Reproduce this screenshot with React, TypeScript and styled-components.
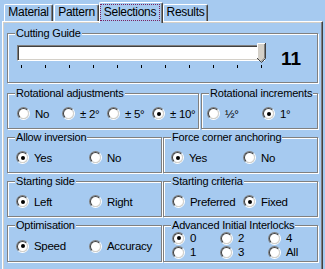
import styled, { createGlobalStyle } from 'styled-components';

const BLUE = '#a6caf0';

const GlobalStyle = createGlobalStyle`
  html, body {
    margin: 0;
    padding: 0;
    background: ${BLUE};
  }
  body {
    font-family: 'Liberation Sans', Arial, sans-serif;
    font-size: 11px;
    letter-spacing: -0.3px;
    color: #000;
    overflow: hidden;
  }
`;

const Window = styled.div`
  width: 325px;
  height: 269px;
  overflow: hidden;
  box-sizing: border-box;
  padding: 2px 0 0 2px;
`;

const TabStrip = styled.div`
  display: flex;
  align-items: flex-end;
  height: 19px;
  padding-left: 2px;
`;

const Tab = styled.div<{ $w: number; $active?: boolean; $gap?: number }>`
  position: relative;
  z-index: ${(p) => (p.$active ? 2 : 1)};
  box-sizing: border-box;
  width: ${(p) => p.$w}px;
  height: ${(p) => (p.$active ? 21 : 17)}px;
  margin-bottom: ${(p) => (p.$active ? -2 : 0)}px;
  margin-right: ${(p) => p.$gap ?? 0}px;
  padding-top: 1px;
  background: ${BLUE};
  border-top: 1px solid #fff;
  border-left: 1px solid #fff;
  border-right: 1px solid #404040;
  border-radius: 2px 2px 0 0;
  box-shadow: inset -1px 0 0 #808080;
  font-size: 12px;
  line-height: 13px;
  text-align: center;
  white-space: nowrap;
`;

const FocusRing = styled.div`
  box-sizing: border-box;
  width: 60px;
  height: 17px;
  border: 1px dotted #7a2060;
  line-height: 13px;
  padding-top: 1px;
`;

const Panel = styled.div`
  box-sizing: border-box;
  width: 321px;
  height: 256px;
  padding: 5px 2px 0 4px;
  border-top: 1px solid #fff;
  border-left: 1px solid #fff;
  border-right: 1px solid #404040;
  box-shadow: inset -1px 0 0 #808080, inset 1px 1px 0 #d4d0c8;
`;

const Groups = styled.div`
  width: 311px;
  display: flex;
  flex-direction: column;
  gap: 2px;
`;

const Row = styled.div<{ $cols: string; $gap: number; $top?: number }>`
  display: grid;
  grid-template-columns: ${(p) => p.$cols};
  column-gap: ${(p) => p.$gap}px;
  margin-top: ${(p) => p.$top ?? 0}px;
`;

const GroupBox = styled.fieldset<{ $h: number }>`
  box-sizing: border-box;
  height: ${(p) => p.$h}px;
  margin: 0;
  padding: 0;
  min-width: 0;
  border: 1px solid #808080;
  box-shadow: 1px 1px 0 #fff, inset 1px 1px 0 #fff;
`;

const Title = styled.legend`
  margin-left: 7px;
  padding: 0 1px;
  line-height: 12px;
  font-size: 11px;
  letter-spacing: -0.2px;
  background: ${BLUE};
  white-space: nowrap;
`;

const Options = styled.div<{ $pad: number }>`
  display: flex;
  align-items: center;
  height: 100%;
  padding-left: ${(p) => p.$pad}px;
`;

const OptionGrid = styled.div<{ $pad: number }>`
  display: grid;
  grid-auto-flow: column;
  grid-template-rows: repeat(2, 14px);
  grid-template-columns: repeat(3, 48px);
  padding-left: ${(p) => p.$pad}px;
`;

const Option = styled.label<{ $w?: number }>`
  display: flex;
  align-items: center;
  gap: 5px;
  width: ${(p) => (p.$w ? `${p.$w}px` : 'auto')};
  font-size: 11.5px;
  white-space: nowrap;
`;

const RadioOuter = styled.span`
  box-sizing: border-box;
  flex: none;
  width: 13px;
  height: 13px;
  border-radius: 50%;
  border: 1px solid;
  border-color: #808080 #ffffff #ffffff #808080;
  display: flex;
  align-items: center;
  justify-content: center;
`;

const RadioInner = styled.span`
  box-sizing: border-box;
  width: 11px;
  height: 11px;
  border-radius: 50%;
  border: 1px solid;
  border-color: #404040 #d4d0c8 #d4d0c8 #404040;
  background: #fff;
  display: flex;
  align-items: center;
  justify-content: center;
`;

const Dot = styled.span`
  width: 4px;
  height: 4px;
  border-radius: 50%;
  background: #000;
`;

const GuideBody = styled.div`
  display: flex;
  align-items: flex-start;
  padding-left: 9px;
`;

const Slider = styled.div`
  position: relative;
  width: 248px;
  padding-top: 6px;
`;

const Track = styled.div`
  box-sizing: border-box;
  height: 16px;
  background: #fff;
  border: 1px solid;
  border-color: #808080 #ffffff #ffffff #808080;
  box-shadow: inset 1px 1px 0 #404040, inset -1px -1px 0 #d4d0c8;
`;

const Thumb = styled.svg`
  position: absolute;
  left: 240px;
  top: 4px;
`;

const Ticks = styled.div`
  display: flex;
  justify-content: space-between;
  margin-top: 4px;
  padding: 0 3px 0 4px;
`;

const Tick = styled.span`
  width: 1px;
  height: 3px;
  background: #000;
`;

const Value = styled.div`
  margin: 10px 0 0 16px;
  font-size: 19px;
  line-height: 19px;
  letter-spacing: 0;
  font-weight: bold;
`;

function Radio({ label, checked, w }: { label: string; checked?: boolean; w?: number }) {
  return (
    <Option $w={w}>
      <RadioOuter>
        <RadioInner>{checked && <Dot />}</RadioInner>
      </RadioOuter>
      {label}
    </Option>
  );
}

export default function App() {
  return (
    <>
      <GlobalStyle />
      <Window>
        <TabStrip>
          <Tab $w={49} $gap={1}>Material</Tab>
          <Tab $w={45}>Pattern</Tab>
          <Tab $w={64} $active>
            <FocusRing>Selections</FocusRing>
          </Tab>
          <Tab $w={45}>Results</Tab>
        </TabStrip>
        <Panel>
          <Groups>
            <GroupBox $h={56}>
              <Title>Cutting Guide</Title>
              <GuideBody>
                <Slider>
                  <Track />
                  <Thumb width="9" height="21" viewBox="0 0 9 21">
                    <polygon points="0,0 8,0 8,15 4,19 0,15" fill="#d4d0c8" />
                    <polyline points="0.5,15 0.5,0.5 8,0.5" fill="none" stroke="#fff" />
                    <polyline points="8.5,0 8.5,15.5 4.5,19.5 0,15" fill="none" stroke="#404040" />
                    <polyline points="7.5,1 7.5,15 4,18.5" fill="none" stroke="#808080" />
                  </Thumb>
                  <Ticks>
                    {Array.from({ length: 11 }, (_, i) => (
                      <Tick key={i} />
                    ))}
                  </Ticks>
                </Slider>
                <Value>11</Value>
              </GuideBody>
            </GroupBox>

            <Row $cols="192px 117px" $gap={2} $top={2}>
              <GroupBox $h={42}>
                <Title>Rotational adjustments</Title>
                <Options $pad={9}>
                  <Radio label="No" w={45} />
                  <Radio label="± 2°" w={45} />
                  <Radio label="± 5°" w={45} />
                  <Radio label="± 10°" checked />
                </Options>
              </GroupBox>
              <GroupBox $h={42}>
                <Title>Rotational increments</Title>
                <Options $pad={5}>
                  <Radio label="½°" w={55} />
                  <Radio label="1°" checked />
                </Options>
              </GroupBox>
            </Row>

            <Row $cols="155px 155px" $gap={1}>
              <GroupBox $h={42}>
                <Title>Allow inversion</Title>
                <Options $pad={8}>
                  <Radio label="Yes" w={73} checked />
                  <Radio label="No" />
                </Options>
              </GroupBox>
              <GroupBox $h={42}>
                <Title>Force corner anchoring</Title>
                <Options $pad={7}>
                  <Radio label="Yes" w={72} checked />
                  <Radio label="No" />
                </Options>
              </GroupBox>
            </Row>

            <Row $cols="155px 155px" $gap={1}>
              <GroupBox $h={42}>
                <Title>Starting side</Title>
                <Options $pad={8}>
                  <Radio label="Left" w={73} checked />
                  <Radio label="Right" />
                </Options>
              </GroupBox>
              <GroupBox $h={42}>
                <Title>Starting criteria</Title>
                <Options $pad={8}>
                  <Radio label="Preferred" w={71} />
                  <Radio label="Fixed" checked />
                </Options>
              </GroupBox>
            </Row>

            <Row $cols="155px 155px" $gap={1}>
              <GroupBox $h={43}>
                <Title>Optimisation</Title>
                <Options $pad={8}>
                  <Radio label="Speed" w={73} checked />
                  <Radio label="Accuracy" />
                </Options>
              </GroupBox>
              <GroupBox $h={43}>
                <Title>Advanced Initial Interlocks</Title>
                <OptionGrid $pad={8}>
                  <Radio label="0" checked />
                  <Radio label="1" />
                  <Radio label="2" />
                  <Radio label="3" />
                  <Radio label="4" />
                  <Radio label="All" />
                </OptionGrid>
              </GroupBox>
            </Row>
          </Groups>
        </Panel>
      </Window>
    </>
  );
}
